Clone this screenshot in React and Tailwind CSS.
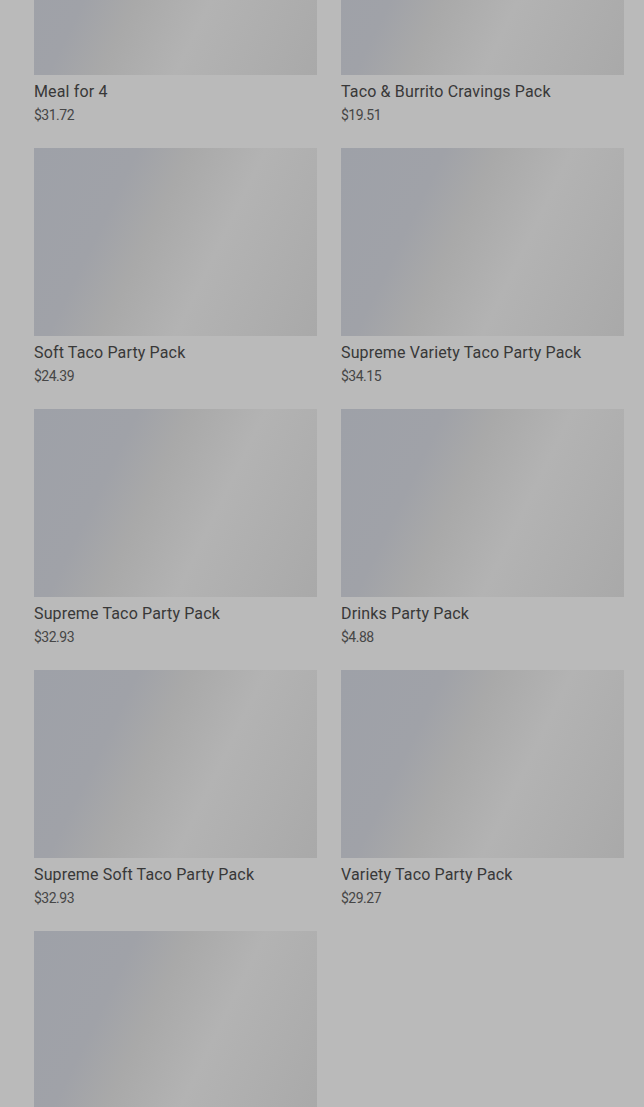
import React from "react";

const items = [
  ["Meal for 4", "$31.72"],
  ["Taco & Burrito Cravings Pack", "$19.51"],
  ["Soft Taco Party Pack", "$24.39"],
  ["Supreme Variety Taco Party Pack", "$34.15"],
  ["Supreme Taco Party Pack", "$32.93"],
  ["Drinks Party Pack", "$4.88"],
  ["Supreme Soft Taco Party Pack", "$32.93"],
  ["Variety Taco Party Pack", "$29.27"],
  ["", ""],
];

export default function App() {
  return (
    <div className="min-h-screen overflow-hidden bg-[#bababa] font-['Roboto',sans-serif]">
      <div className="-mt-[113px] grid grid-cols-2 gap-x-6 gap-y-[23px] pl-[34px] pr-[20px]">
        {items.map(([name, price], i) => (
          <div key={i} className="flex flex-col">
            <div className="h-[188px] w-full bg-[linear-gradient(116deg,#9ea1a8_0%,#a0a2a8_28%,#a9a9a9_42%,#b3b3b3_62%,#a9a9a9_100%)]" />
            {name && (
              <>
                <div className="mt-[5px] text-[16px] font-normal leading-6 tracking-[0.15px] text-[#383838]">{name}</div>
                <div className="mt-px text-[14px] leading-5 tracking-[-0.5px] text-[#464646]">{price}</div>
              </>
            )}
          </div>
        ))}
      </div>
    </div>
  );
}
